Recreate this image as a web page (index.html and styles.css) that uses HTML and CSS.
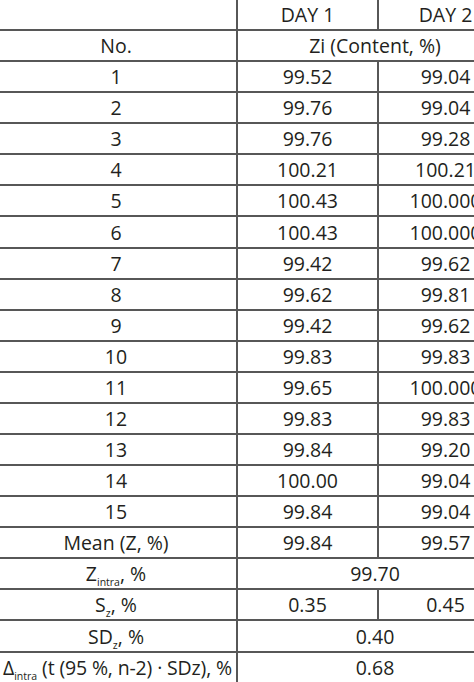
FILE: index.html
```html
<!DOCTYPE html>
<html>
<head>
<meta charset="utf-8">
<link rel="stylesheet" href="styles.css">
</head>
<body>
<div class="frame">
<table class="data">
  <colgroup>
    <col class="c-label">
    <col class="c-day">
    <col class="c-day2">
  </colgroup>
  <thead>
    <tr class="head-row">
      <td></td>
      <td>DAY 1</td>
      <td>DAY 2</td>
    </tr>
    <tr><td>No.</td><td colspan="2">Zi (Content, %)</td></tr>
  </thead>
  <tbody>
    <tr><td>1</td><td>99.52</td><td>99.04</td></tr>
    <tr><td>2</td><td>99.76</td><td>99.04</td></tr>
    <tr><td>3</td><td>99.76</td><td>99.28</td></tr>
    <tr><td>4</td><td>100.21</td><td>100.21</td></tr>
    <tr><td>5</td><td>100.43</td><td>100.000</td></tr>
    <tr><td>6</td><td>100.43</td><td>100.000</td></tr>
    <tr><td>7</td><td>99.42</td><td>99.62</td></tr>
    <tr><td>8</td><td>99.62</td><td>99.81</td></tr>
    <tr><td>9</td><td>99.42</td><td>99.62</td></tr>
    <tr><td>10</td><td>99.83</td><td>99.83</td></tr>
    <tr><td>11</td><td>99.65</td><td>100.000</td></tr>
    <tr><td>12</td><td>99.83</td><td>99.83</td></tr>
    <tr><td>13</td><td>99.84</td><td>99.20</td></tr>
    <tr><td>14</td><td>100.00</td><td>99.04</td></tr>
    <tr><td>15</td><td>99.84</td><td>99.04</td></tr>
    <tr><td>Mean (Z, %)</td><td>99.84</td><td>99.57</td></tr>
    <tr><td>Z<sub class="sb">intra</sub>, %</td><td colspan="2">99.70</td></tr>
    <tr><td>S<sub class="sb">z</sub>, %</td><td>0.35</td><td>0.45</td></tr>
    <tr><td>SD<sub class="sb">z</sub>, %</td><td colspan="2">0.40</td></tr>
    <tr><td class="long">Δ<sub class="sb">intra</sub> (t (95 %, n-2) · SDz), %</td><td colspan="2">0.68</td></tr>
  </tbody>
</table>
</div>
</body>
</html>
```

FILE: styles.css
```css
html, body {
  margin: 0;
  padding: 0;
  overflow: hidden;
  background: #ffffff;
}

.frame {
  width: 474px;
  height: 682px;
  overflow: hidden;
}

.data {
  border-collapse: separate;
  border-spacing: 0;
  table-layout: fixed;
  width: 518px;
  margin-left: -4px;
  font-family: "Open Sans", "Noto Sans", sans-serif;
  font-size: 19.5px;
  color: #231f20;
}

.c-label { width: 242px; }
.c-day { width: 141px; }
.c-day2 { width: 135px; }

.data td {
  height: 31.08px;
  padding: 0;
  text-align: center;
  vertical-align: middle;
  white-space: nowrap;
  border-bottom: 2px solid #575757;
  border-right: 2px solid #575757;
  box-sizing: border-box;
}

.data .head-row td {
  height: 31px;
}

.data td.long {
  letter-spacing: -0.15px;
  padding-left: 3px;
}

.sb {
  font-size: 10.5px;
  vertical-align: -5px;
  line-height: 0;
  letter-spacing: 0;
}
```
